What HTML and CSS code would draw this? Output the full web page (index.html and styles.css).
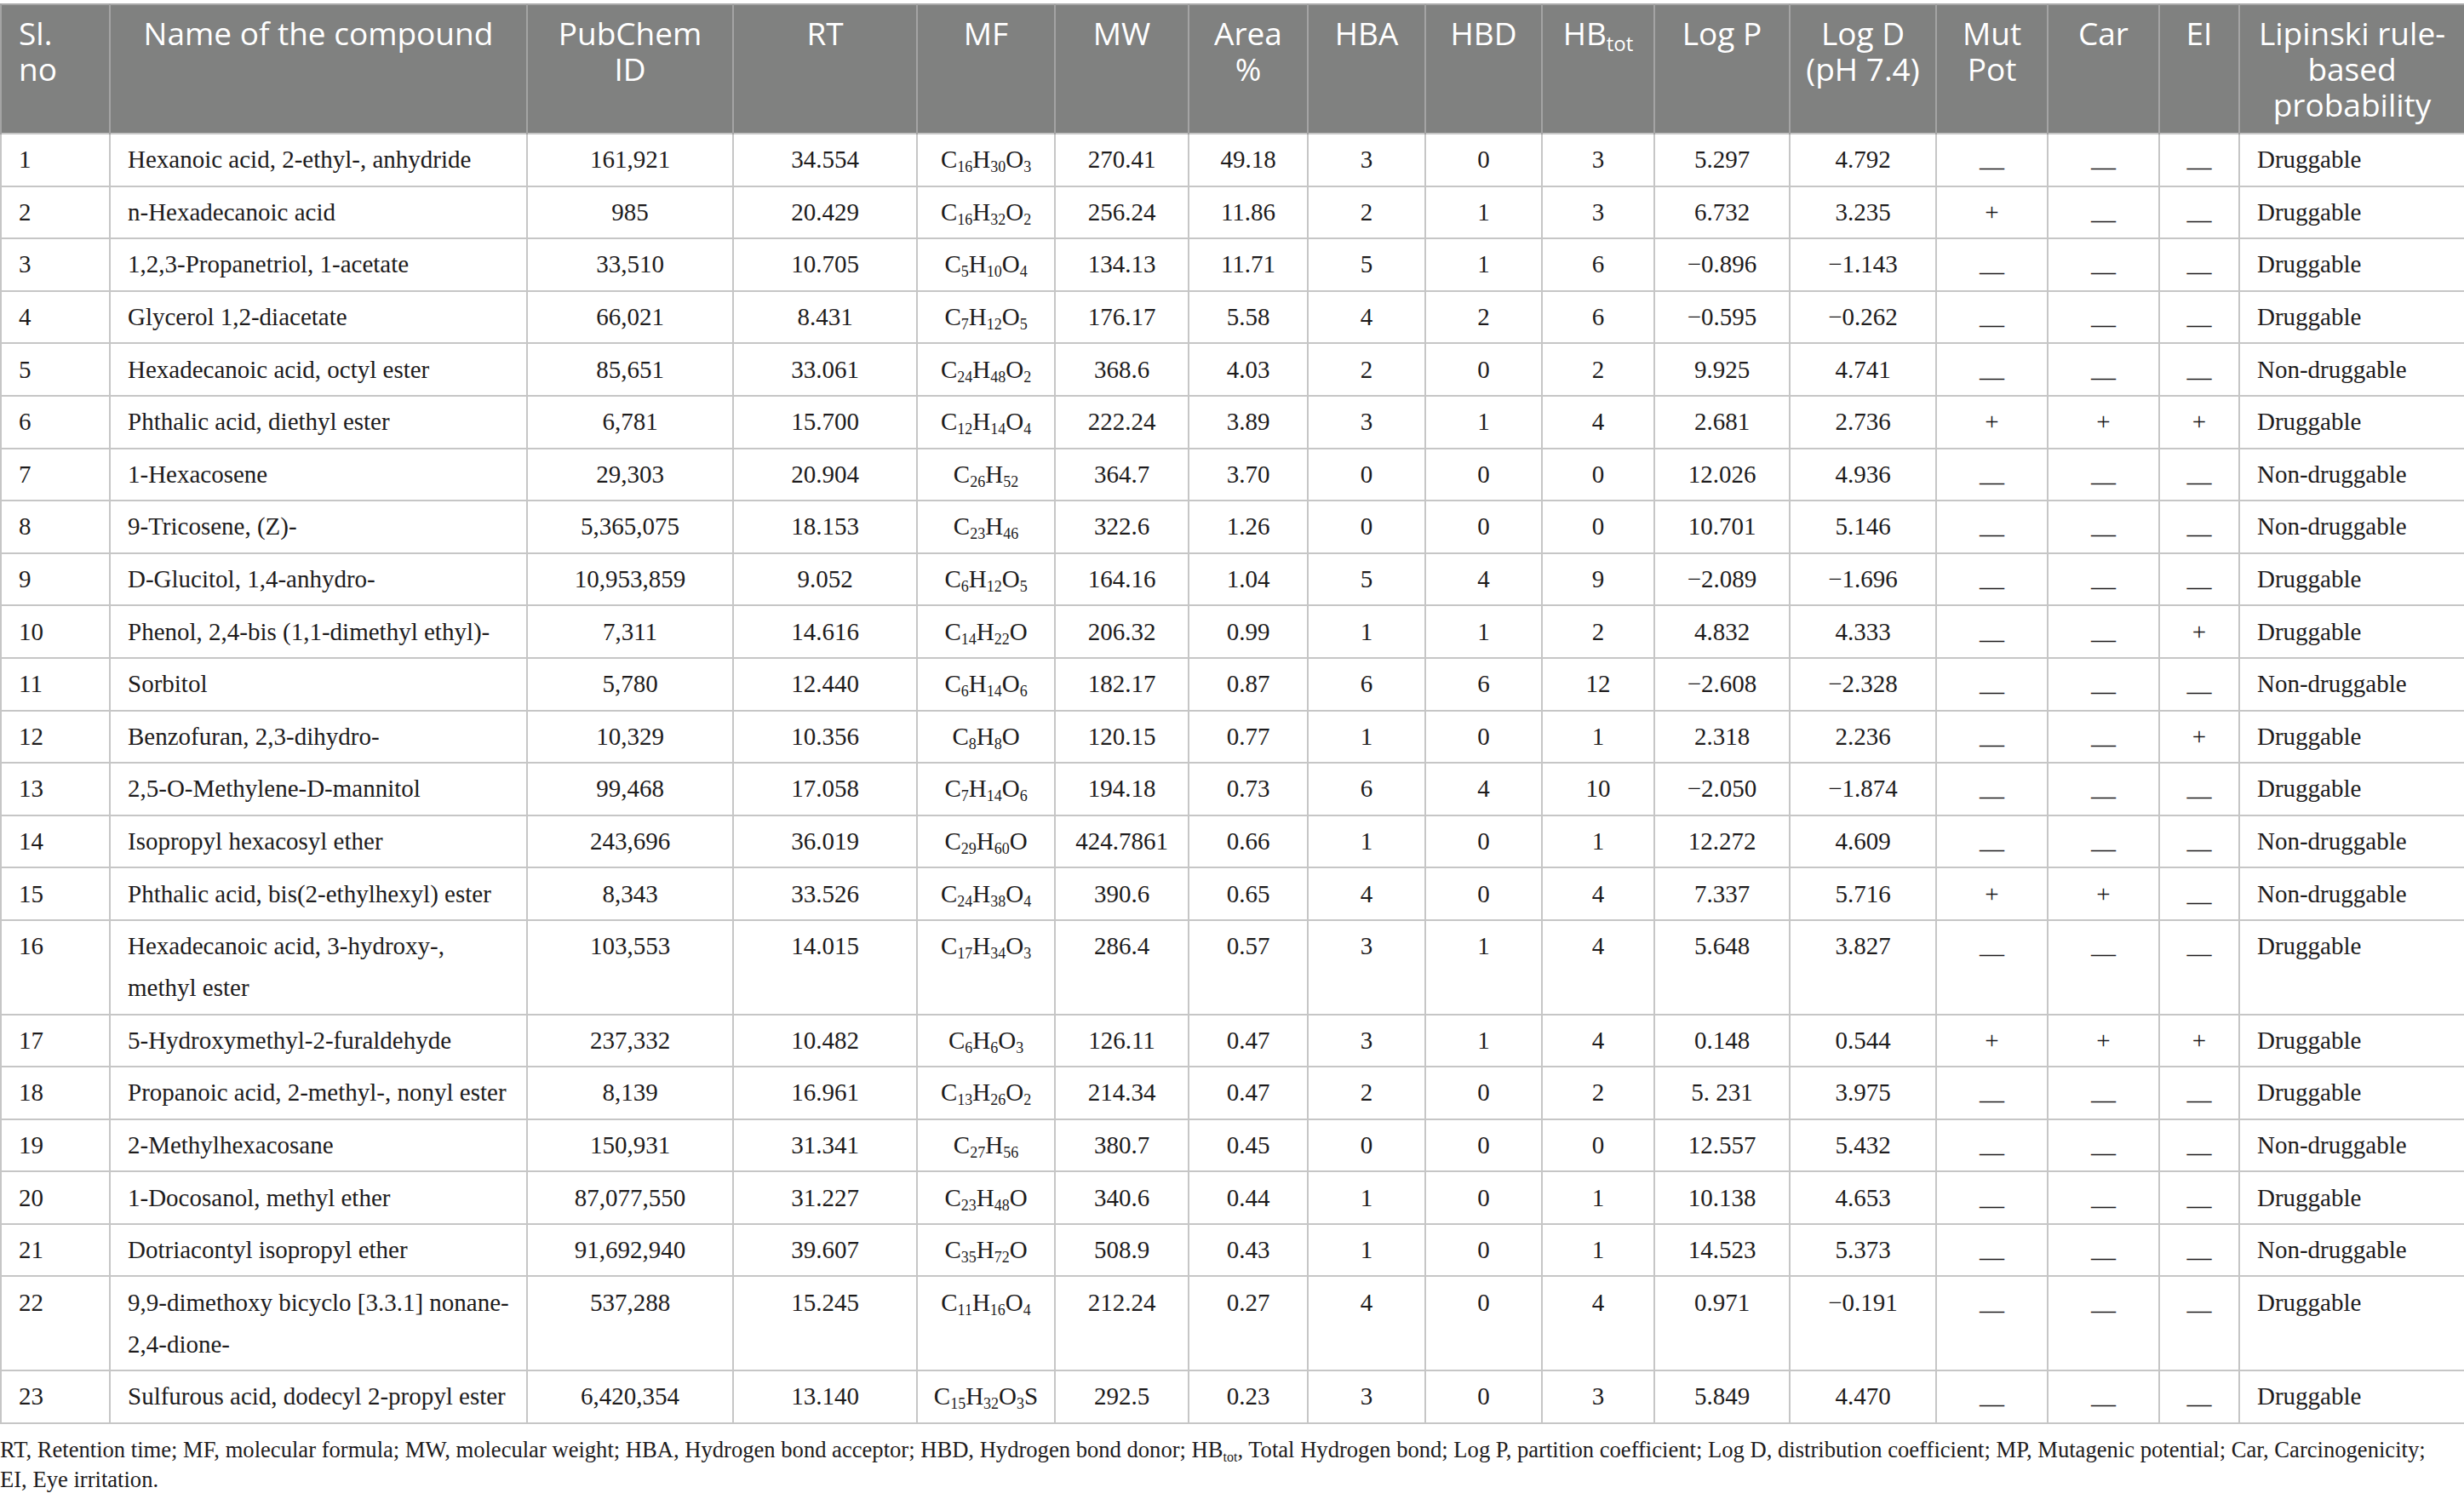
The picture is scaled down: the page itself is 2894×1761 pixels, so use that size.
FILE: index.html
```html
<!DOCTYPE html>
<html lang="en">
<head>
    <meta charset="UTF-8">
    <meta name="viewport" content="width=device-width, initial-scale=1.0">
    <title>Compounds</title>

    <link rel="stylesheet" href="styles.css">
</head>
<body>
    <table class="tabla">
        <colgroup>
            <col class="c-sl">
            <col class="c-name">
            <col class="c-pub">
            <col class="c-rt">
            <col class="c-mf">
            <col class="c-mw">
            <col class="c-area">
            <col class="c-hba">
            <col class="c-hbd">
            <col class="c-hbt">
            <col class="c-logp">
            <col class="c-logd">
            <col class="c-mut">
            <col class="c-car">
            <col class="c-ei">
            <col class="c-lip">
        </colgroup>
        <thead>
            <tr>
                <th class="izq">Sl.<br>no</th>
                <th>Name of the compound</th>
                <th>PubChem<br>ID</th>
                <th>RT</th>
                <th>MF</th>
                <th>MW</th>
                <th>Area<br>%</th>
                <th>HBA</th>
                <th>HBD</th>
                <th>HB<sub>tot</sub></th>
                <th>Log P</th>
                <th>Log D<br>(pH 7.4)</th>
                <th>Mut<br>Pot</th>
                <th>Car</th>
                <th>EI</th>
                <th>Lipinski rule-<br>based<br>probability</th>
            </tr>
        </thead>
        <tbody>
            <tr>
                <td class="izq">1</td><td class="izq">Hexanoic acid, 2-ethyl-, anhydride</td><td>161,921</td><td>34.554</td>
                <td>C<sub>16</sub>H<sub>30</sub>O<sub>3</sub></td><td>270.41</td><td>49.18</td><td>3</td><td>0</td><td>3</td>
                <td>5.297</td><td>4.792</td><td><span class="nil">—</span></td><td><span class="nil">—</span></td><td><span class="nil">—</span></td><td class="izq">Druggable</td>
            </tr>
            <tr>
                <td class="izq">2</td><td class="izq">n-Hexadecanoic acid</td><td>985</td><td>20.429</td>
                <td>C<sub>16</sub>H<sub>32</sub>O<sub>2</sub></td><td>256.24</td><td>11.86</td><td>2</td><td>1</td><td>3</td>
                <td>6.732</td><td>3.235</td><td>+</td><td><span class="nil">—</span></td><td><span class="nil">—</span></td><td class="izq">Druggable</td>
            </tr>
            <tr>
                <td class="izq">3</td><td class="izq">1,2,3-Propanetriol, 1-acetate</td><td>33,510</td><td>10.705</td>
                <td>C<sub>5</sub>H<sub>10</sub>O<sub>4</sub></td><td>134.13</td><td>11.71</td><td>5</td><td>1</td><td>6</td>
                <td>−0.896</td><td>−1.143</td><td><span class="nil">—</span></td><td><span class="nil">—</span></td><td><span class="nil">—</span></td><td class="izq">Druggable</td>
            </tr>
            <tr>
                <td class="izq">4</td><td class="izq">Glycerol 1,2-diacetate</td><td>66,021</td><td>8.431</td>
                <td>C<sub>7</sub>H<sub>12</sub>O<sub>5</sub></td><td>176.17</td><td>5.58</td><td>4</td><td>2</td><td>6</td>
                <td>−0.595</td><td>−0.262</td><td><span class="nil">—</span></td><td><span class="nil">—</span></td><td><span class="nil">—</span></td><td class="izq">Druggable</td>
            </tr>
            <tr>
                <td class="izq">5</td><td class="izq">Hexadecanoic acid, octyl ester</td><td>85,651</td><td>33.061</td>
                <td>C<sub>24</sub>H<sub>48</sub>O<sub>2</sub></td><td>368.6</td><td>4.03</td><td>2</td><td>0</td><td>2</td>
                <td>9.925</td><td>4.741</td><td><span class="nil">—</span></td><td><span class="nil">—</span></td><td><span class="nil">—</span></td><td class="izq">Non-druggable</td>
            </tr>
            <tr>
                <td class="izq">6</td><td class="izq">Phthalic acid, diethyl ester</td><td>6,781</td><td>15.700</td>
                <td>C<sub>12</sub>H<sub>14</sub>O<sub>4</sub></td><td>222.24</td><td>3.89</td><td>3</td><td>1</td><td>4</td>
                <td>2.681</td><td>2.736</td><td>+</td><td>+</td><td>+</td><td class="izq">Druggable</td>
            </tr>
            <tr>
                <td class="izq">7</td><td class="izq">1-Hexacosene</td><td>29,303</td><td>20.904</td>
                <td>C<sub>26</sub>H<sub>52</sub></td><td>364.7</td><td>3.70</td><td>0</td><td>0</td><td>0</td>
                <td>12.026</td><td>4.936</td><td><span class="nil">—</span></td><td><span class="nil">—</span></td><td><span class="nil">—</span></td><td class="izq">Non-druggable</td>
            </tr>
            <tr>
                <td class="izq">8</td><td class="izq">9-Tricosene, (Z)-</td><td>5,365,075</td><td>18.153</td>
                <td>C<sub>23</sub>H<sub>46</sub></td><td>322.6</td><td>1.26</td><td>0</td><td>0</td><td>0</td>
                <td>10.701</td><td>5.146</td><td><span class="nil">—</span></td><td><span class="nil">—</span></td><td><span class="nil">—</span></td><td class="izq">Non-druggable</td>
            </tr>
            <tr>
                <td class="izq">9</td><td class="izq">D-Glucitol, 1,4-anhydro-</td><td>10,953,859</td><td>9.052</td>
                <td>C<sub>6</sub>H<sub>12</sub>O<sub>5</sub></td><td>164.16</td><td>1.04</td><td>5</td><td>4</td><td>9</td>
                <td>−2.089</td><td>−1.696</td><td><span class="nil">—</span></td><td><span class="nil">—</span></td><td><span class="nil">—</span></td><td class="izq">Druggable</td>
            </tr>
            <tr>
                <td class="izq">10</td><td class="izq">Phenol, 2,4-bis (1,1-dimethyl ethyl)-</td><td>7,311</td><td>14.616</td>
                <td>C<sub>14</sub>H<sub>22</sub>O</td><td>206.32</td><td>0.99</td><td>1</td><td>1</td><td>2</td>
                <td>4.832</td><td>4.333</td><td><span class="nil">—</span></td><td><span class="nil">—</span></td><td>+</td><td class="izq">Druggable</td>
            </tr>
            <tr>
                <td class="izq">11</td><td class="izq">Sorbitol</td><td>5,780</td><td>12.440</td>
                <td>C<sub>6</sub>H<sub>14</sub>O<sub>6</sub></td><td>182.17</td><td>0.87</td><td>6</td><td>6</td><td>12</td>
                <td>−2.608</td><td>−2.328</td><td><span class="nil">—</span></td><td><span class="nil">—</span></td><td><span class="nil">—</span></td><td class="izq">Non-druggable</td>
            </tr>
            <tr>
                <td class="izq">12</td><td class="izq">Benzofuran, 2,3-dihydro-</td><td>10,329</td><td>10.356</td>
                <td>C<sub>8</sub>H<sub>8</sub>O</td><td>120.15</td><td>0.77</td><td>1</td><td>0</td><td>1</td>
                <td>2.318</td><td>2.236</td><td><span class="nil">—</span></td><td><span class="nil">—</span></td><td>+</td><td class="izq">Druggable</td>
            </tr>
            <tr>
                <td class="izq">13</td><td class="izq">2,5-O-Methylene-D-mannitol</td><td>99,468</td><td>17.058</td>
                <td>C<sub>7</sub>H<sub>14</sub>O<sub>6</sub></td><td>194.18</td><td>0.73</td><td>6</td><td>4</td><td>10</td>
                <td>−2.050</td><td>−1.874</td><td><span class="nil">—</span></td><td><span class="nil">—</span></td><td><span class="nil">—</span></td><td class="izq">Druggable</td>
            </tr>
            <tr>
                <td class="izq">14</td><td class="izq">Isopropyl hexacosyl ether</td><td>243,696</td><td>36.019</td>
                <td>C<sub>29</sub>H<sub>60</sub>O</td><td>424.7861</td><td>0.66</td><td>1</td><td>0</td><td>1</td>
                <td>12.272</td><td>4.609</td><td><span class="nil">—</span></td><td><span class="nil">—</span></td><td><span class="nil">—</span></td><td class="izq">Non-druggable</td>
            </tr>
            <tr>
                <td class="izq">15</td><td class="izq">Phthalic acid, bis(2-ethylhexyl) ester</td><td>8,343</td><td>33.526</td>
                <td>C<sub>24</sub>H<sub>38</sub>O<sub>4</sub></td><td>390.6</td><td>0.65</td><td>4</td><td>0</td><td>4</td>
                <td>7.337</td><td>5.716</td><td>+</td><td>+</td><td><span class="nil">—</span></td><td class="izq">Non-druggable</td>
            </tr>
            <tr>
                <td class="izq">16</td><td class="izq">Hexadecanoic acid, 3-hydroxy-,<br>methyl ester</td><td>103,553</td><td>14.015</td>
                <td>C<sub>17</sub>H<sub>34</sub>O<sub>3</sub></td><td>286.4</td><td>0.57</td><td>3</td><td>1</td><td>4</td>
                <td>5.648</td><td>3.827</td><td><span class="nil">—</span></td><td><span class="nil">—</span></td><td><span class="nil">—</span></td><td class="izq">Druggable</td>
            </tr>
            <tr>
                <td class="izq">17</td><td class="izq">5-Hydroxymethyl-2-furaldehyde</td><td>237,332</td><td>10.482</td>
                <td>C<sub>6</sub>H<sub>6</sub>O<sub>3</sub></td><td>126.11</td><td>0.47</td><td>3</td><td>1</td><td>4</td>
                <td>0.148</td><td>0.544</td><td>+</td><td>+</td><td>+</td><td class="izq">Druggable</td>
            </tr>
            <tr>
                <td class="izq">18</td><td class="izq">Propanoic acid, 2-methyl-, nonyl ester</td><td>8,139</td><td>16.961</td>
                <td>C<sub>13</sub>H<sub>26</sub>O<sub>2</sub></td><td>214.34</td><td>0.47</td><td>2</td><td>0</td><td>2</td>
                <td>5. 231</td><td>3.975</td><td><span class="nil">—</span></td><td><span class="nil">—</span></td><td><span class="nil">—</span></td><td class="izq">Druggable</td>
            </tr>
            <tr>
                <td class="izq">19</td><td class="izq">2-Methylhexacosane</td><td>150,931</td><td>31.341</td>
                <td>C<sub>27</sub>H<sub>56</sub></td><td>380.7</td><td>0.45</td><td>0</td><td>0</td><td>0</td>
                <td>12.557</td><td>5.432</td><td><span class="nil">—</span></td><td><span class="nil">—</span></td><td><span class="nil">—</span></td><td class="izq">Non-druggable</td>
            </tr>
            <tr>
                <td class="izq">20</td><td class="izq">1-Docosanol, methyl ether</td><td>87,077,550</td><td>31.227</td>
                <td>C<sub>23</sub>H<sub>48</sub>O</td><td>340.6</td><td>0.44</td><td>1</td><td>0</td><td>1</td>
                <td>10.138</td><td>4.653</td><td><span class="nil">—</span></td><td><span class="nil">—</span></td><td><span class="nil">—</span></td><td class="izq">Druggable</td>
            </tr>
            <tr>
                <td class="izq">21</td><td class="izq">Dotriacontyl isopropyl ether</td><td>91,692,940</td><td>39.607</td>
                <td>C<sub>35</sub>H<sub>72</sub>O</td><td>508.9</td><td>0.43</td><td>1</td><td>0</td><td>1</td>
                <td>14.523</td><td>5.373</td><td><span class="nil">—</span></td><td><span class="nil">—</span></td><td><span class="nil">—</span></td><td class="izq">Non-druggable</td>
            </tr>
            <tr>
                <td class="izq">22</td><td class="izq">9,9-dimethoxy bicyclo [3.3.1] nonane-<br>2,4-dione-</td><td>537,288</td><td>15.245</td>
                <td>C<sub>11</sub>H<sub>16</sub>O<sub>4</sub></td><td>212.24</td><td>0.27</td><td>4</td><td>0</td><td>4</td>
                <td>0.971</td><td>−0.191</td><td><span class="nil">—</span></td><td><span class="nil">—</span></td><td><span class="nil">—</span></td><td class="izq">Druggable</td>
            </tr>
            <tr>
                <td class="izq">23</td><td class="izq">Sulfurous acid, dodecyl 2-propyl ester</td><td>6,420,354</td><td>13.140</td>
                <td>C<sub>15</sub>H<sub>32</sub>O<sub>3</sub>S</td><td>292.5</td><td>0.23</td><td>3</td><td>0</td><td>3</td>
                <td>5.849</td><td>4.470</td><td><span class="nil">—</span></td><td><span class="nil">—</span></td><td><span class="nil">—</span></td><td class="izq">Druggable</td>
            </tr>
        </tbody>
    </table>

    <!-- Nota al pie de la tabla -->
    <p class="nota">RT, Retention time; MF, molecular formula; MW, molecular weight; HBA, Hydrogen bond acceptor; HBD, Hydrogen bond donor; HB<sub>tot</sub>, Total Hydrogen bond; Log P, partition coefficient; Log D, distribution coefficient; MP, Mutagenic potential; Car, Carcinogenicity; EI, Eye irritation.</p>
</body>
</html>
```

FILE: styles.css
```css
body {
    margin: 0;
    padding-top: 4px;
    background-color: #ffffff;
    color: #1d1b1c;
    font-family: "Liberation Serif", "Times New Roman", Times, serif;
}

.tabla {
    width: 2894px;
    table-layout: fixed;
    border-collapse: collapse;
    border: 2px solid #c4c4c4;
    border-top-color: #a8a8a8;
    border-bottom-color: #b4b4b4;
}

.c-sl { width: 128px; }
.c-name { width: 490px; }
.c-pub { width: 242px; }
.c-rt { width: 216px; }
.c-mf { width: 162px; }
.c-mw { width: 157px; }
.c-area { width: 140px; }
.c-hba { width: 138px; }
.c-hbd { width: 137px; }
.c-hbt { width: 132px; }
.c-logp { width: 159px; }
.c-logd { width: 172px; }
.c-mut { width: 131px; }
.c-car { width: 131px; }
.c-ei { width: 94px; }
.c-lip { width: 265px; }

.tabla th {
    background-color: #808180;
    color: #ffffff;
    font-family: "Open Sans", "DejaVu Sans", sans-serif;
    font-weight: 400;
    font-size: 37px;
    line-height: 42px;
    text-align: center;
    vertical-align: top;
    padding: 12px 10px;
    border-left: 2px solid #a4a4a4;
    border-right: 2px solid #a4a4a4;
}

.tabla th sub {
    font-size: 24px;
    line-height: 0;
    vertical-align: -7px;
}

.tabla th.izq {
    text-align: left;
    padding-left: 20px;
}

.tabla td {
    font-size: 29px;
    line-height: 49px;
    text-align: center;
    vertical-align: top;
    padding: 5.3px 12px;
    border: 2px solid #c6c6c6;
    white-space: nowrap;
}

.tabla td.izq {
    text-align: left;
    padding-left: 20px;
}

.tabla td sub {
    font-size: 18px;
    line-height: 0;
    vertical-align: -5px;
}

.nil {
    line-height: 0;
    vertical-align: -0.3em;
}

.nota {
    margin: 0;
    padding-top: 13px;
    max-width: 2862px;
    font-size: 26.6px;
    line-height: 35px;
}

.nota sub {
    font-size: 16px;
    line-height: 0;
    vertical-align: -5px;
}
```
